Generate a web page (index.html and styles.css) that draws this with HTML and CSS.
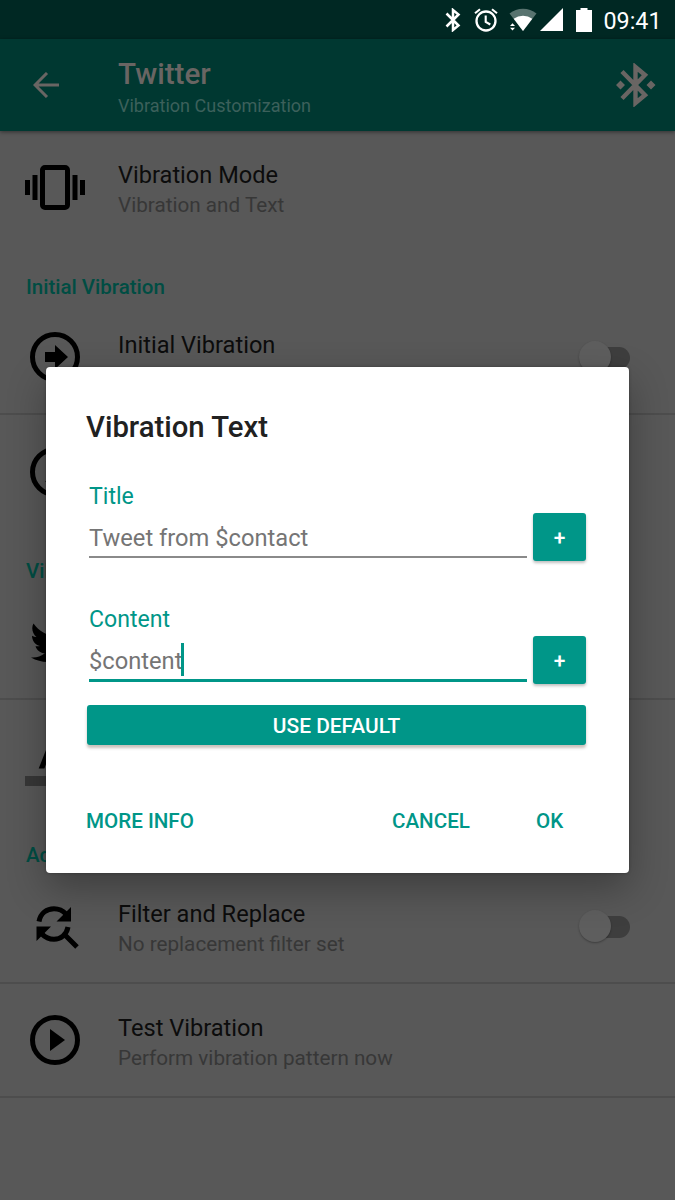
FILE: index.html
```html
<!DOCTYPE html>
<html lang="en">
<head>
<meta charset="utf-8">
<title>Vibration Customization</title>
<link rel="stylesheet" href="styles.css">
</head>
<body>
<div class="screen">
  <div class="status-bar">
    <svg class="st-bt" viewBox="0 0 16 24"><path d="M1.500 5.500l12 12L8 22V2l5.500 4.500-12 12" fill="none" stroke="#fff" stroke-width="2.500"/></svg>
    <svg class="st-alarm" viewBox="0 0 24 24"><circle cx="12" cy="13" r="9.500" fill="none" stroke="#fff" stroke-width="2.300"/><path d="M1 5.200L6 1.200M23 5.200L18 1.200M11.700 7.500v6.300l4.600 2.700" fill="none" stroke="#fff" stroke-width="2.100"/></svg>
    <svg class="st-wifi" viewBox="0 0 28 24"><path d="M.5 5.500a21.500 21.500 0 0 1 27 0L14 23z" fill="#58736f"/><path d="M4.700 10.800a15.500 15.500 0 0 1 18.600 0L14 23z" fill="#fff"/><path d="M0 14h6.500v9H0z" fill="#002823"/><path d="M1 18l2.500-2.800L6 18zM1 19.800h5l-2.500 2.800z" fill="#fff"/></svg>
    <svg class="st-signal" viewBox="0 0 23 23"><path d="M23 0v23H0z" fill="#fff"/></svg>
    <svg class="st-battery" viewBox="0 0 16 24"><path d="M4.500 0h7v2H16v22H0V2h4.500z" fill="#fff"/></svg>
    <span class="clock">09:41</span>
  </div>
  <header class="app-bar">
    <svg class="back" viewBox="0 0 26 26"><path d="M26 13H2M14 1L2 13l12 12" fill="none" stroke="#696563" stroke-width="3"/></svg>
    <div class="heading">
      <div class="app-title">Twitter</div>
      <div class="app-sub">Vibration Customization</div>
    </div>
    <svg class="bt" viewBox="0 0 40 44"><path d="M6 8.500l23 23.500L19.500 40V4l9.500 8L6 35.500" fill="none" stroke="#696563" stroke-width="4.400"/><path d="M4.500 17.500L9 22l-4.500 4.500L0 22zM35 17.500L39.500 22 35 26.500 30.500 22z" fill="#696563"/></svg>
  </header>
  <main class="list">
    <div class="row">
      <div class="icon"><svg width="60" height="46" viewBox="0 0 60 46"><path d="M0 15h5v15H0zM7.500 10h5v25h-5zM47.500 10h5v25h-5zM55 15h5v15h-5z"/><rect x="17.500" y="2.500" width="25" height="40" rx="2.500" fill="none" stroke="#000" stroke-width="5"/></svg></div>
      <div class="texts"><div class="title">Vibration Mode</div><div class="sub">Vibration and Text</div></div>
    </div>
    <div class="category first">Initial Vibration</div>
    <div class="row lined">
      <div class="icon"><svg width="50" height="50" viewBox="0 0 50 50"><circle cx="25" cy="25" r="22.500" fill="none" stroke="#000" stroke-width="5"/><path d="M15 20h10v-7l13 12-13 12v-7H15z"/></svg></div>
      <div class="texts"><div class="title">Initial Vibration</div></div>
      <div class="switch"></div>
    </div>
    <div class="row">
      <div class="icon"><svg width="50" height="50" viewBox="0 0 50 50"><circle cx="25" cy="25" r="22.500" fill="none" stroke="#000" stroke-width="5"/><path d="M15 35l3-3v3z"/></svg></div>
    </div>
    <div class="category">Vibration</div>
    <div class="row lined">
      <div class="icon bird"><svg width="50" height="42" viewBox="0 0 50 42"><path d="M50 6c-2 1-4 1.500-6 1.700 2-1.400 3.600-3.400 4.500-5.700-2 1.200-4 2-6.500 2.500A10.300 10.300 0 0 0 24.500 14C16 13.500 8 9.500 2.500 1.500c-2.500 4.500-1 10.500 3 13.500-1.500 0-3-.5-4.500-1.300 0 5 3.500 9.300 8 10.300-1.500.4-3 .4-4.500.2 1.300 4 5 7 9.500 7.100C10 34.500 5 36 0 35.500 18 46 45 38 45 11c2-1.400 3.700-3 5-5z"/></svg></div>
    </div>
    <div class="row">
      <div class="icon letter"><svg width="60" height="60" viewBox="0 0 60 60"><path d="M0 50h60v10H0z" fill="#373737"/><path d="M27.500 7.500L13.700 42.500h5.700L22.200 35h15.600l2.800 7.500h5.700L32.500 7.500zM24 30l6-16 6 16z"/></svg></div>
    </div>
    <div class="category">Advanced</div>
    <div class="row lined">
      <div class="icon find"><svg width="44" height="44" viewBox="0 0 44 44"><path d="M3 15.500C4.500 7 11 2.700 18 2.700c5 0 9 2 12 5.300M32 21c-1.500 8-7.500 12.300-14 12.300-5 0-9-2-12-5.300M28 28l13 13" fill="none" stroke="#000" stroke-width="5"/><path d="M35 1v14.500H20.500zM.5 20.500H15L.5 35z"/></svg></div>
      <div class="texts"><div class="title">Filter and Replace</div><div class="sub">No replacement filter set</div></div>
      <div class="switch"></div>
    </div>
    <div class="row lined">
      <div class="icon"><svg width="50" height="50" viewBox="0 0 50 50"><circle cx="25" cy="25" r="22.500" fill="none" stroke="#000" stroke-width="5"/><path d="M20 14l15 11-15 11z"/></svg></div>
      <div class="texts"><div class="title">Test Vibration</div><div class="sub">Perform vibration pattern now</div></div>
    </div>
  </main>
  <section class="dialog">
    <h1>Vibration Text</h1>
    <div class="field">
      <div class="entry"><label>Title</label><div class="input">Tweet from $contact</div></div>
      <div class="add">+</div>
    </div>
    <div class="field">
      <div class="entry"><label>Content</label><div class="input focused">$content<span class="caret"></span></div></div>
      <div class="add">+</div>
    </div>
    <div class="default"><span>USE DEFAULT</span></div>
    <div class="actions"><span class="more">MORE INFO</span><span class="cancel">CANCEL</span><span class="ok">OK</span></div>
  </section>
</div>
</body>
</html>
```
FILE: styles.css
```css
* { box-sizing: border-box; }
body { margin: 0; font-family: Roboto, sans-serif; }
svg { display: block; flex: none; }
.screen { position: relative; width: 675px; height: 1200px; background: #585858; overflow: hidden; }
.status-bar { height: 39px; background: #002823; display: flex; align-items: flex-start; padding: 8px 0 0 445px; color: #fff; }
.st-bt { width: 16px; height: 24px; }
.st-alarm { width: 24px; height: 24px; margin-left: 13px; }
.st-wifi { width: 28px; height: 24px; margin-left: 11px; }
.st-signal { width: 23px; height: 23px; margin-left: 3px; }
.st-battery { width: 16px; height: 24px; margin-left: 13px; }
.clock { font-size: 23.3px; line-height: 26px; margin-left: 11.5px; }
.app-bar { position: relative; height: 92px; background: #003831; display: flex; color: #696563; box-shadow: 0 1px 4px rgba(0,0,0,.45); }
.back { width: 26px; height: 26px; margin: 33px 0 0 33px; }
.heading { margin: 18px 0 0 59px; width: 498px; }
.app-title { font-size: 29.6px; font-weight: 500; line-height: 35px; }
.app-sub { font-size: 18.05px; line-height: 27px; color: #3c605b; }
.bt { width: 40px; height: 44px; margin-top: 24px; }
.row { height: 114px; display: flex; align-items: center; }
.lined { border-bottom: 2px solid #4d4d4d; }
.icon { width: 110.5px; display: flex; justify-content: center; flex: none; }
.find { padding: 3px 0 0 5px; }
.bird { padding: 3px 0 0 1px; }
.letter { padding-bottom: 2px; }
.texts { height: 60px; width: 461px; margin: 4px 0 0 7.5px; }
.lined .texts { margin-top: 6px; }
.title { font-size: 23.6px; line-height: 30px; color: #0c0c0c; }
.sub { font-size: 20.7px; line-height: 30px; color: #373737; }
.category { height: 56.5px; padding: 28.5px 0 0 26px; line-height: 26px; font-size: 20.5px; font-weight: 500; color: #004d43; }
.first { height: 56px; padding-top: 29px; }
.switch { position: relative; width: 51px; height: 34px; }
.switch::before { content: ""; position: absolute; left: 15px; top: 7px; width: 36px; height: 22px; border-radius: 11px; background: #3e3e3e; }
.switch::after { content: ""; position: absolute; left: 0; top: 1px; width: 32px; height: 32px; border-radius: 50%; background: #5e5e5e; box-shadow: 0 1px 2px rgba(0,0,0,.3); }
.dialog { position: absolute; left: 46px; top: 367px; width: 583px; height: 505.500px; padding: 40px 43px 0 40px; background: #fff; border-radius: 4px; box-shadow: 0 15px 38px rgba(0,0,0,.3), 0 0 3px rgba(0,0,0,.3); }
h1 { margin: 0 0 33px; font-size: 29.3px; line-height: 40px; font-weight: 500; color: #212121; }
.field { height: 123px; display: flex; justify-content: space-between; }
.entry { width: 438px; margin-left: 3px; }
label { display: block; height: 31px; font-size: 23.1px; line-height: 33px; color: #009688; }
.input { height: 47px; font-size: 23.7px; line-height: 54px; color: #757575; border-bottom: 2px solid #8a8a8a; display: flex; }
.focused { height: 48px; border-bottom: 3px solid #009688; }
.caret { width: 3px; height: 33px; margin: 9px 0 0 -1px; background: #009688; }
.add { width: 53px; height: 48px; margin-top: 33px; border-radius: 3px; background: #009688; color: #fff; font-size: 21px; line-height: 50px; font-weight: 500; text-align: center; box-shadow: 0 2px 3px rgba(0,0,0,.25); }
.default { width: 499px; height: 40px; margin: -21px 0 0 1px; border-radius: 3px; background: #009688; color: #fff; font-size: 20.9px; line-height: 42px; font-weight: 500; text-align: center; box-shadow: 0 3px 3px rgba(80,50,30,.3); }
.actions { display: flex; margin-top: 61px; color: #009688; font-size: 20.6px; line-height: 30px; font-weight: 500; }
.more { width: 306px; }
.cancel { width: 144px; }
```
